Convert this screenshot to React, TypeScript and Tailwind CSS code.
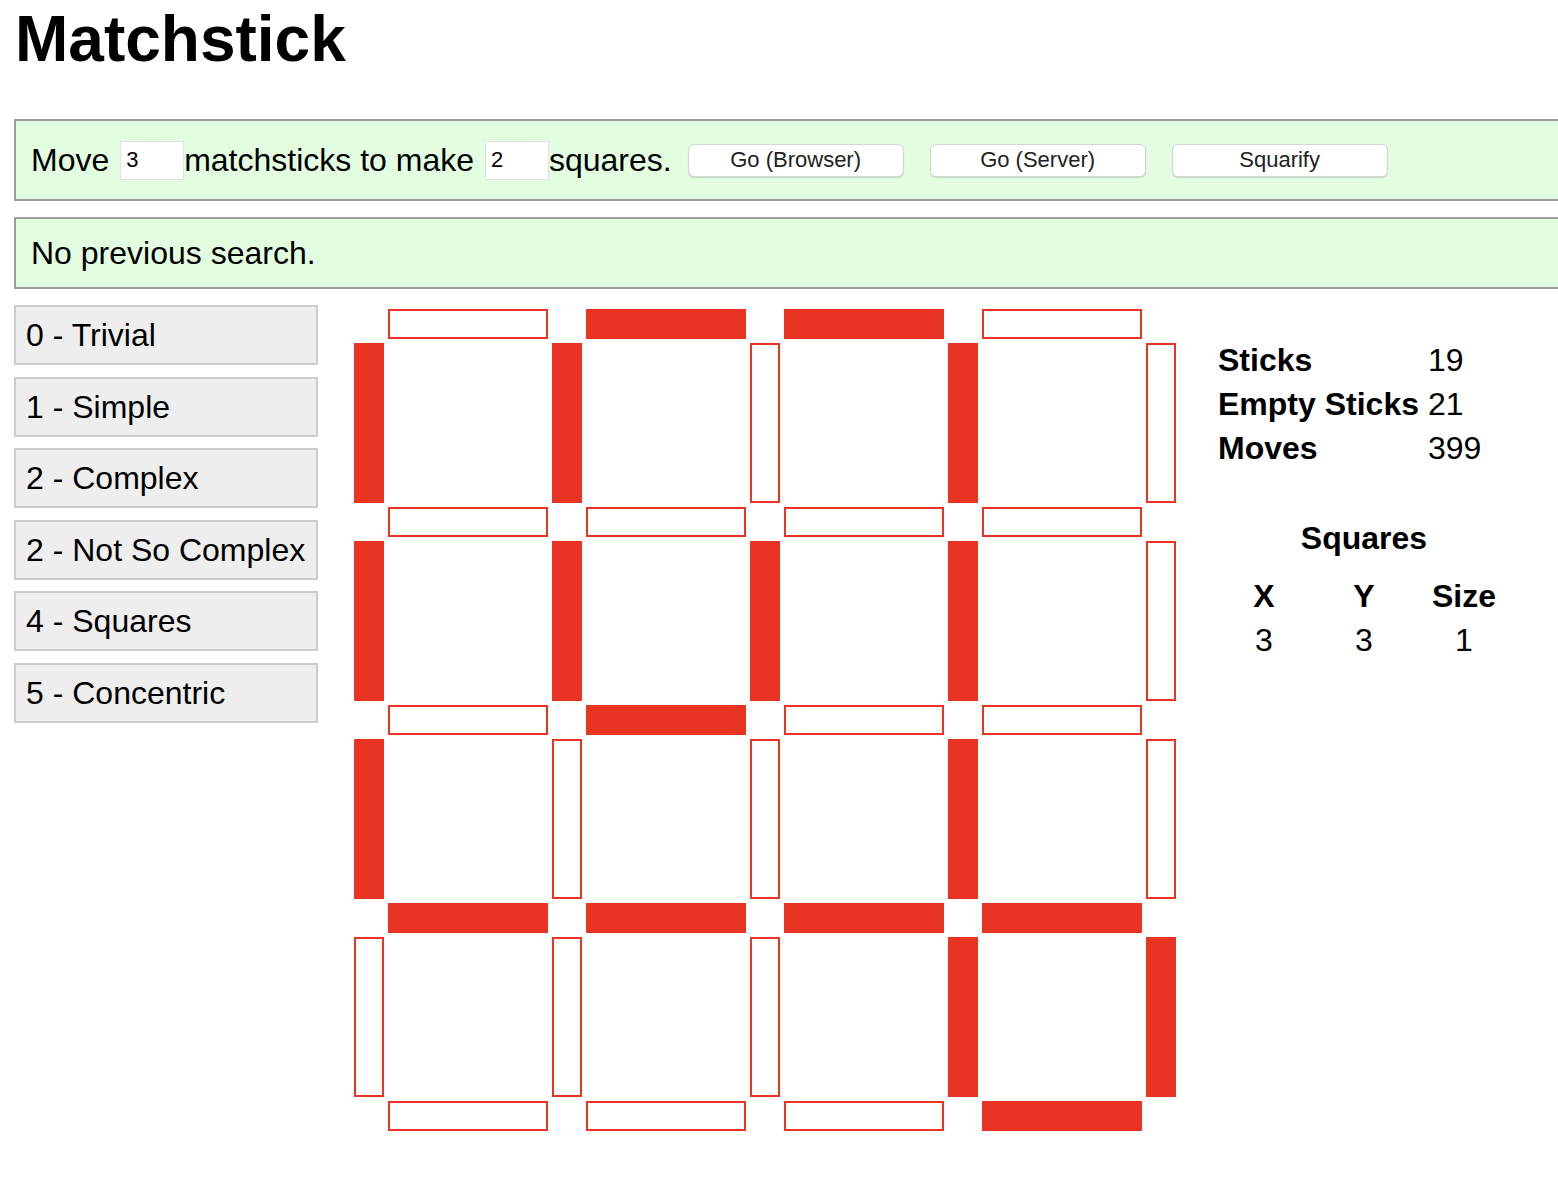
import React from "react";

const H = [
  [0, 1, 1, 0],
  [0, 0, 0, 0],
  [0, 1, 0, 0],
  [1, 1, 1, 1],
  [0, 0, 0, 1],
];

const V = [
  [1, 1, 0, 1, 0],
  [1, 1, 1, 1, 0],
  [1, 0, 0, 1, 0],
  [0, 0, 0, 1, 1],
];

const puzzles = [
  "0 - Trivial",
  "1 - Simple",
  "2 - Complex",
  "2 - Not So Complex",
  "4 - Squares",
  "5 - Concentric",
];

function Stick({ on }: { on: boolean }) {
  return on ? (
    <div className="bg-[#e93424]" />
  ) : (
    <div className="border-2 border-[#e93424] bg-white" />
  );
}

function Board() {
  const cells = [];
  for (let r = 0; r < 9; r++) {
    for (let c = 0; c < 9; c++) {
      const key = `${r}-${c}`;
      if (r % 2 === 0 && c % 2 === 1) {
        cells.push(<Stick key={key} on={H[r / 2][(c - 1) / 2] === 1} />);
      } else if (r % 2 === 1 && c % 2 === 0) {
        cells.push(<Stick key={key} on={V[(r - 1) / 2][c / 2] === 1} />);
      } else {
        cells.push(<div key={key} />);
      }
    }
  }
  return (
    <div className="mt-[4px] grid grid-cols-[30px_160px_30px_160px_30px_160px_30px_160px_30px] grid-rows-[30px_160px_30px_160px_30px_160px_30px_160px_30px] gap-[4px]">
      {cells}
    </div>
  );
}

export default function App() {
  return (
    <div className="min-h-screen bg-white pl-[14px] pt-[7px] font-['Liberation_Sans',Arial,Helvetica,sans-serif] text-black">
      <h1 className="ml-[1px] text-[64px] font-bold leading-none">Matchstick</h1>

      {/* query bar */}
      <div className="mt-[48px] flex h-[82px] items-center border-2 border-r-0 border-[#9e9e9e] bg-[#e3fde0] pl-[15px] text-[32px]">
        <span className="whitespace-pre">Move </span>
        <input
          defaultValue="3"
          className="ml-[2px] h-[39px] w-[64px] border border-[#e2e2e2] bg-white pl-[5px] text-[22px] outline-none"
        />
        <span className="whitespace-pre">matchsticks to make </span>
        <input
          defaultValue="2"
          className="ml-[2px] h-[39px] w-[64px] border border-[#e2e2e2] bg-white pl-[5px] text-[22px] outline-none"
        />
        <span>squares.</span>
        <div className="ml-[16px] flex gap-[26px]">
          {["Go (Browser)", "Go (Server)", "Squarify"].map((b) => (
            <button
              key={b}
              className="h-[33px] w-[216px] rounded-[6px] border border-[#d4d4d4] bg-white text-[22px] leading-none text-[#222] shadow-[0_1px_1px_rgba(0,0,0,0.15)]"
            >
              {b}
            </button>
          ))}
        </div>
      </div>

      {/* status */}
      <div className="mt-[16px] flex h-[72px] items-center border-2 border-r-0 border-[#9e9e9e] bg-[#e3fde0] pl-[15px] text-[32px]">
        No previous search.
      </div>

      <div className="mt-[16px] flex items-start">
        <div className="flex w-[304px] flex-col gap-[11.6px]">
          {puzzles.map((p) => (
            <div
              key={p}
              className="flex h-[60px] items-center border-2 border-[#cccccc] bg-[#eeeeee] pl-[10px] text-[32px]"
            >
              {p}
            </div>
          ))}
        </div>

        <div className="ml-[36px]">
          <Board />
        </div>

        <div className="ml-[38px] mt-[33px] text-[32px] leading-[44px]">
          <div className="grid grid-cols-[210px_auto] pl-[4px]">
            <div className="font-bold">Sticks</div>
            <div>19</div>
            <div className="font-bold">Empty Sticks</div>
            <div>21</div>
            <div className="font-bold">Moves</div>
            <div>399</div>
          </div>

          <div className="mt-[46px] w-[300px] text-center">
            <div className="font-bold">Squares</div>
            <div className="mt-[14px] grid grid-cols-3">
              <div className="font-bold">X</div>
              <div className="font-bold">Y</div>
              <div className="font-bold">Size</div>
              <div>3</div>
              <div>3</div>
              <div>1</div>
            </div>
          </div>
        </div>
      </div>
    </div>
  );
}
